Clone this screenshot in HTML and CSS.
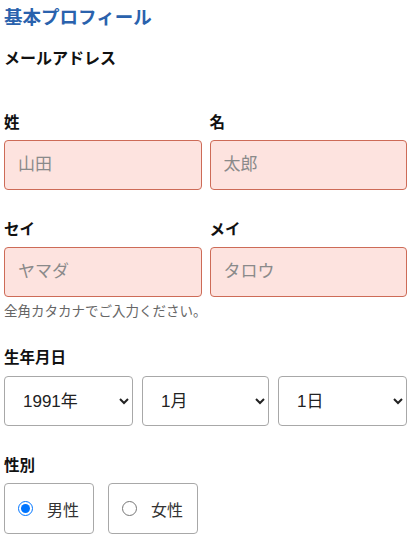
FILE: index.html
```html
<!DOCTYPE html>
<html lang="ja">
<head>
<meta charset="utf-8">
<link rel="stylesheet" href="styles.css">
</head>
<body>
<form class="form">
  <h2 class="title">基本プロフィール</h2>
  <div class="field email">
    <div class="label">メールアドレス</div>
  </div>
  <div class="row">
    <div class="col">
      <div class="label">姓</div>
      <input class="text err" placeholder="山田">
    </div>
    <div class="col">
      <div class="label">名</div>
      <input class="text err" placeholder="太郎">
    </div>
  </div>
  <div class="row kana">
    <div class="col">
      <div class="label">セイ</div>
      <input class="text err" placeholder="ヤマダ">
    </div>
    <div class="col">
      <div class="label">メイ</div>
      <input class="text err" placeholder="タロウ">
    </div>
  </div>
  <div class="hint">全角カタカナでご入力ください。</div>
  <div class="field birth">
    <div class="label">生年月日</div>
    <div class="selects">
      <select class="sel"><option>1991年</option></select>
      <select class="sel"><option>1月</option></select>
      <select class="sel"><option>1日</option></select>
    </div>
  </div>
  <div class="field gender">
    <div class="label">性別</div>
    <div class="radios">
      <label class="radio"><input type="radio" name="g" checked><span>男性</span></label>
      <label class="radio"><input type="radio" name="g"><span>女性</span></label>
    </div>
  </div>
</form>
</body>
</html>
```
FILE: styles.css
```css
html, body {
  margin: 0;
  padding: 0;
  background: #fff;
}
body {
  font-family: "Liberation Sans", "Noto Sans CJK JP", sans-serif;
  color: #111;
}
.form {
  padding: 6px 6px 0 4px;
  display: flex;
  flex-direction: column;
}
.title {
  margin: 0;
  font-size: 18.5px;
  line-height: 24px;
  font-weight: bold;
  color: #2a62ad;
}
.label {
  font-size: 15.5px;
  line-height: 20px;
  font-weight: bold;
  color: #111;
}
.email .label {
  font-size: 16px;
}
.email {
  margin-top: 19px;
  height: 64px;
}
.row {
  display: flex;
  gap: 8px;
}
.kana {
  margin-top: 30px;
}
.col {
  flex: 1;
  display: flex;
  flex-direction: column;
  gap: 7px;
}
.text {
  box-sizing: border-box;
  height: 50px;
  width: 100%;
  margin: 0;
  padding: 0 13px;
  border-radius: 4px;
  font-family: inherit;
  font-size: 17px;
  outline: none;
}
.err {
  background: #fde3df;
  border: 1px solid #cd6b57;
}
.text::placeholder {
  color: #8a8a8a;
}
.hint {
  margin-top: 6px;
  font-size: 13.5px;
  line-height: 18px;
  color: #666;
}
.birth {
  margin-top: 27px;
}
.selects {
  margin-top: 8px;
  display: grid;
  grid-template-columns: 129px 127px 129px;
  gap: 9px;
}
.sel {
  box-sizing: border-box;
  height: 50px;
  margin: 0;
  padding: 0 8px 0 14px;
  border: 1px solid #a8a8a8;
  border-radius: 4px;
  background: #fff;
  font-family: inherit;
  font-size: 17px;
  color: #222;
}
.gender {
  margin-top: 30px;
}
.radios {
  margin-top: 7px;
  display: flex;
  gap: 14px;
}
.radio {
  box-sizing: border-box;
  width: 90px;
  height: 51px;
  border: 1px solid #a8a8a8;
  border-radius: 4px;
  display: flex;
  align-items: center;
  padding-left: 13px;
  gap: 14px;
  font-size: 16px;
  color: #333;
}
.radio input {
  margin: 0;
  width: 15px;
  height: 15px;
  accent-color: #0075ff;
}
```
